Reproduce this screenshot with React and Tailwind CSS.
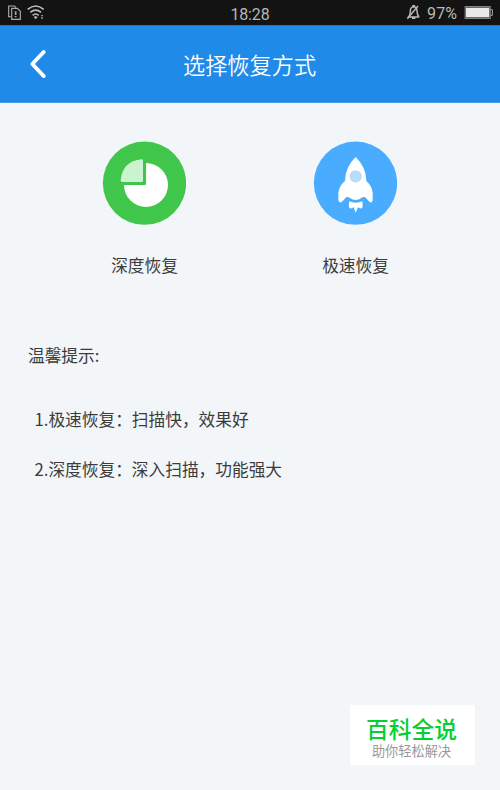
import React from 'react';

function StatusBar() {
  return (
    <div className="flex h-[25px] shrink-0 items-center bg-[#131313] text-[#b8b8b8]">
      <svg className="block h-[25px] w-[50px]" viewBox="0 0 150 75" fill="none" stroke="#a9a9a9" strokeWidth="3.5">
        <path d="M32 50H26V18H43L48 23" />
        <path d="M35 25H52L61 34V58H35Z" />
        <path d="M47 34V45M47 48V52" strokeWidth="5" />
        <g stroke="#bdbdbd" strokeWidth="5">
          <path d="M83 28Q107 8 131 28" />
          <path d="M91 37Q107 24 123 37" />
          <path d="M98 46Q107 38 116 46" />
        </g>
        <path d="M101 51Q107 46 113 51L107 58Z" fill="#bdbdbd" stroke="none" />
        <path d="M126 45V49M126 52V56" strokeWidth="5" />
      </svg>
      <div className="w-[400px] pt-[4px] text-center font-['Roboto',sans-serif] text-[16px] leading-[24px] tracking-[-0.15px]">18:28</div>
      <div className="-ml-[50px] flex w-[100px] items-center">
        <svg className="block h-[25px] w-[27px] shrink-0" viewBox="0 0 81 75" fill="none" stroke="#b8b8b8" strokeWidth="4.5">
          <path d="M23 51H58M27 50Q31 44 31 33Q31 21 41 20Q51 21 51 33Q51 44 57 50M39 20V17H43V20M36 55H46" />
          <path d="M22 56L54 18" />
        </svg>
        <span className="w-[37px] pt-[2px] font-['Roboto',sans-serif] text-[16px] leading-[24px] tracking-[0.15px]">97%</span>
        <svg className="block h-[25px] w-[36px] shrink-0" viewBox="192 0 108 75" fill="none">
          <rect x="195.500" y="20" width="75" height="35" stroke="#999" strokeWidth="3" />
          <rect x="198" y="23" width="70" height="29" fill="#e9e9e9" />
          <path d="M272 29H277V46H272" stroke="#aaa" strokeWidth="3" />
        </svg>
      </div>
    </div>
  );
}

function PieIcon() {
  return (
    <svg className="block size-[84px]" viewBox="36 33 252 252">
      <circle cx="163.500" cy="159.500" r="125" fill="#41c64c" />
      <path d="M168 99A66 66 0 1 1 102 165H164Q168 165 168 161Z" fill="#fff" />
      <path d="M155 88Q159 88 159 92V152Q159 156 155 156H97Q92 156 92 151Q97 94 155 88Z" fill="#caf3cf" />
    </svg>
  );
}

function RocketIcon() {
  return (
    <svg className="block size-[84px]" viewBox="39 33 252 252">
      <circle cx="166.500" cy="159.500" r="125" fill="#49acff" />
      <path d="M167 81Q199 112 199 153Q216 168 218 188V211Q217 219 210 217Q203 211 196 202Q190 199 184 204Q176 210 167 210Q158 210 150 204Q143 199 138 202Q131 211 124 217Q117 219 115 211V188Q117 168 135 153Q135 112 167 81Z" fill="#fff" />
      <path d="M148 214Q167 222 187 214Q189 225 187 234Q181 237 174 232L167 248L161 232Q154 237 148 234Q145 225 148 214Z" fill="#fff" />
      <circle cx="167" cy="139" r="18.500" fill="#b6ddff" />
    </svg>
  );
}

function RecoveryOption({ icon, label }) {
  return (
    <div className="flex w-[84px] flex-col items-center">
      {icon}
      <span className="ml-px mt-[28px] whitespace-nowrap text-[16.700px] leading-[24px]">{label}</span>
    </div>
  );
}

export default function App() {
  return (
    <div className="relative flex h-[790px] w-[500px] flex-col overflow-hidden bg-[#f2f6f9] font-['Noto_Sans_CJK_SC',sans-serif] text-[#3b3b3b]">
      <StatusBar />
      <header className="flex h-[78px] shrink-0 items-center border-y border-t-[#1c77c8] border-b-[#3d9aed] bg-[#1f8ae8]">
        <svg className="ml-[28px] block h-[32px] w-[20px]" viewBox="0 0 60 96" fill="none" stroke="#fff" strokeWidth="12" strokeLinecap="round" strokeLinejoin="round">
          <path d="M47 12L13 48L47 84" />
        </svg>
        <h1 className="ml-[135px] whitespace-nowrap text-[22.200px] font-[350] leading-[32px] text-white">选择恢复方式</h1>
      </header>
      <main className="flex flex-col">
        <div className="mt-[38px] flex gap-[127px] pl-[102px]">
          <RecoveryOption icon={<PieIcon />} label="深度恢复" />
          <RecoveryOption icon={<RocketIcon />} label="极速恢复" />
        </div>
        <section className="mt-[66px] pl-[28px] text-[16.700px] leading-[24px]">
          <h2>温馨提示:</h2>
          <ol className="mt-[40px] flex flex-col gap-[26px] pl-[6.500px]">
            <li>1.极速恢复：扫描快，效果好</li>
            <li>2.深度恢复：深入扫描，功能强大</li>
          </ol>
        </section>
      </main>
      <aside className="absolute left-[350px] top-[705px] flex h-[60px] w-[125px] flex-col items-center bg-white pr-[2px]">
        <span className="mt-[11px] whitespace-nowrap text-[22.800px] font-medium leading-[26px] text-[#06cf33]">百科全说</span>
        <span className="whitespace-nowrap text-[13.200px] leading-[18px] text-[#999]">助你轻松解决</span>
      </aside>
    </div>
  );
}
